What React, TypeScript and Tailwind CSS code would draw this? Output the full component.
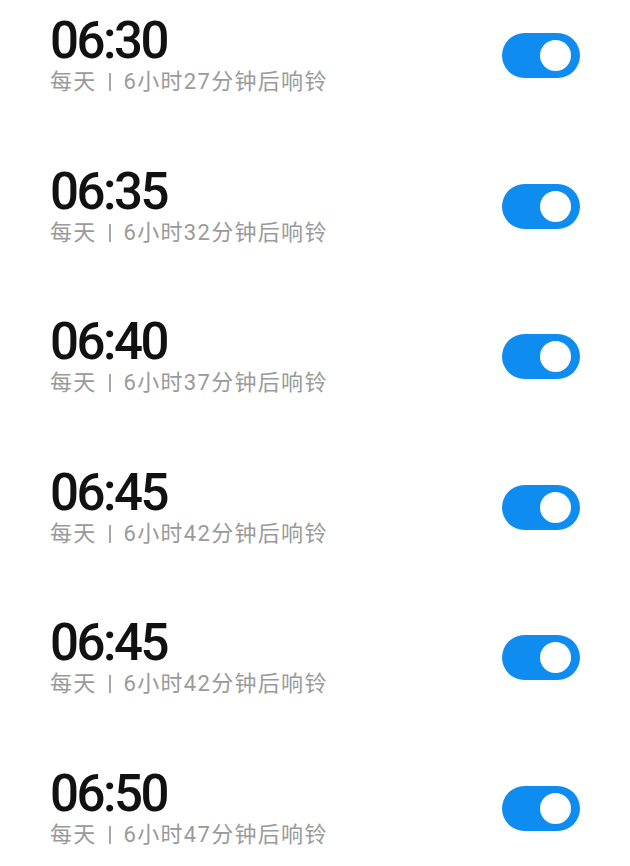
import React, { useState } from 'react';

type Alarm = { time: string; remain: string };

const alarms: Alarm[] = [
  { time: '06:30', remain: '6小时27分钟后响铃' },
  { time: '06:35', remain: '6小时32分钟后响铃' },
  { time: '06:40', remain: '6小时37分钟后响铃' },
  { time: '06:45', remain: '6小时42分钟后响铃' },
  { time: '06:45', remain: '6小时42分钟后响铃' },
  { time: '06:50', remain: '6小时47分钟后响铃' },
];

function Toggle({ on, onClick }: { on: boolean; onClick: () => void }) {
  return (
    <button
      onClick={onClick}
      className={`flex items-center w-[78px] h-[45px] rounded-full px-[9px] ${
        on ? 'bg-[#0f8cf0] justify-end' : 'bg-[#d9d9d9] justify-start'
      }`}
    >
      <span className="block w-[31px] h-[31px] rounded-full bg-white" />
    </button>
  );
}

export default function App() {
  const [states, setStates] = useState(alarms.map(() => true));

  return (
    <div className="w-[630px] h-[866px] overflow-hidden bg-white font-['Roboto','Noto_Sans_CJK_SC',sans-serif]">
      {alarms.map((a, i) => (
        <div key={i} className="h-[150.6px] flex items-start pt-[15px] pl-[50px] pr-[50px]">
          <div className="flex-1 flex items-center justify-between">
            <div className="flex flex-col">
              <span className="text-[51px] leading-[52px] font-medium text-[#111] tracking-[-2.5px]">
                {a.time}
              </span>
              <span className="mt-[1px] flex items-center text-[22px] leading-[28px] text-[#9a9a9a] tracking-[1.3px]">
                每天
                <span className="ml-[12px] mr-[13px] inline-block w-[2px] h-[18px] bg-[#a8a8a8]" />
                {a.remain}
              </span>
            </div>
            <Toggle
              on={states[i]}
              onClick={() => setStates((s) => s.map((v, j) => (j === i ? !v : v)))}
            />
          </div>
        </div>
      ))}
    </div>
  );
}
